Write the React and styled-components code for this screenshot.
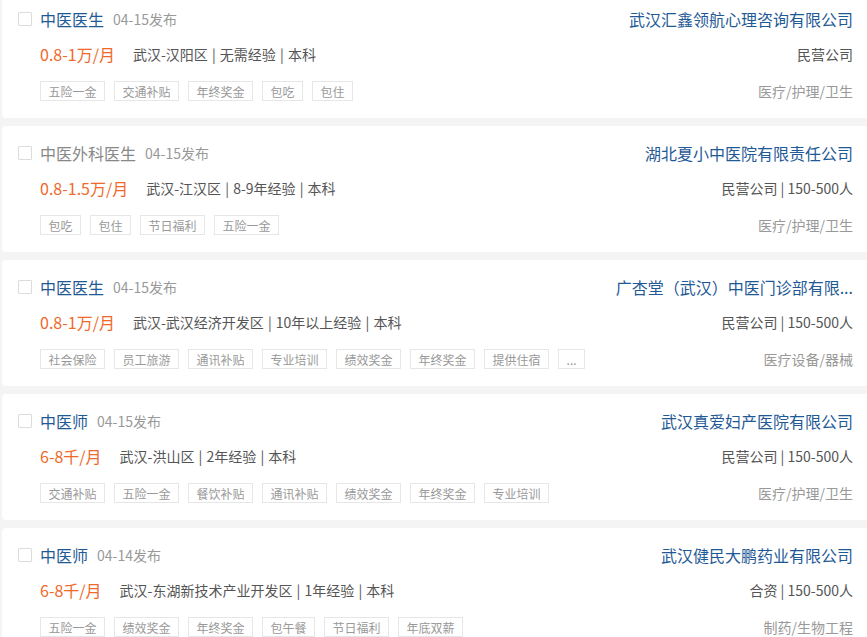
import React from 'react';
import styled, { createGlobalStyle } from 'styled-components';

const GlobalStyle = createGlobalStyle`
  html, body {
    margin: 0;
    padding: 0;
    background: #f4f4f4;
    overflow: hidden;
    font-family: "Noto Sans CJK SC", "Noto Sans", sans-serif;
  }
`;

const List = styled.div`
  display: flex;
  flex-direction: column;
  gap: 8px;
  margin-top: -8px;
  padding-left: 2px;
  margin-right: -6px;
`;

const Card = styled.div`
  display: flex;
  justify-content: space-between;
  background: #fff;
  border-radius: 4px;
  height: 126px;
  box-sizing: border-box;
  padding: 17px 20px 17px 16px;
`;

const Column = styled.div`
  display: flex;
  flex-direction: column;
  align-items: ${p => (p.$right ? 'flex-end' : 'flex-start')};
  min-width: 0;
`;

const Row = styled.div`
  display: flex;
  align-items: center;
  height: 20px;
  margin-top: ${p => p.$gap || 0}px;
  white-space: nowrap;
`;

const Check = styled.span`
  width: 12px;
  height: 12px;
  border: 1px solid #dcdcdc;
  border-radius: 1px;
  background: #fff;
  margin-right: 8px;
`;

const Title = styled.span`
  font-size: 16px;
  color: ${p => (p.$visited ? '#888' : '#1f5a96')};
  margin-right: 9px;
`;

const Date = styled.span`
  font-size: 14px;
  color: #999;
`;

const Salary = styled.span`
  font-size: 16px;
  color: #f0692a;
  margin-left: 22px;
  margin-right: 18px;
`;

const Info = styled.span`
  font-size: 14px;
  color: #555;
  word-spacing: 1px;
`;

const Tags = styled.div`
  display: flex;
  gap: 9px;
  margin-left: 22px;
`;

const Tag = styled.span`
  display: flex;
  align-items: center;
  height: 20px;
  box-sizing: border-box;
  padding: 0 7.5px;
  border: 1px solid #e6e6e6;
  font-size: 12px;
  color: #999;
`;

const Company = styled.span`
  font-size: 16px;
  color: #1f5a96;
`;

const Kind = styled.span`
  font-size: 14px;
  color: #555;
`;

const Industry = styled.span`
  font-size: 14px;
  color: #999;
`;

const jobs = [
  {
    title: '中医医生', date: '04-15发布', salary: '0.8-1万/月',
    info: '武汉-汉阳区 | 无需经验 | 本科',
    tags: ['五险一金', '交通补贴', '年终奖金', '包吃', '包住'],
    company: '武汉汇鑫领航心理咨询有限公司', kind: '民营公司', industry: '医疗/护理/卫生',
  },
  {
    title: '中医外科医生', visited: true, date: '04-15发布', salary: '0.8-1.5万/月',
    info: '武汉-江汉区 | 8-9年经验 | 本科',
    tags: ['包吃', '包住', '节日福利', '五险一金'],
    company: '湖北夏小中医院有限责任公司', kind: '民营公司 | 150-500人', industry: '医疗/护理/卫生',
  },
  {
    title: '中医医生', date: '04-15发布', salary: '0.8-1万/月',
    info: '武汉-武汉经济开发区 | 10年以上经验 | 本科',
    tags: ['社会保险', '员工旅游', '通讯补贴', '专业培训', '绩效奖金', '年终奖金', '提供住宿', '...'],
    company: '广杏堂（武汉）中医门诊部有限...', kind: '民营公司 | 150-500人', industry: '医疗设备/器械',
  },
  {
    title: '中医师', date: '04-15发布', salary: '6-8千/月',
    info: '武汉-洪山区 | 2年经验 | 本科',
    tags: ['交通补贴', '五险一金', '餐饮补贴', '通讯补贴', '绩效奖金', '年终奖金', '专业培训'],
    company: '武汉真爱妇产医院有限公司', kind: '民营公司 | 150-500人', industry: '医疗/护理/卫生',
  },
  {
    title: '中医师', date: '04-14发布', salary: '6-8千/月',
    info: '武汉-东湖新技术产业开发区 | 1年经验 | 本科',
    tags: ['五险一金', '绩效奖金', '年终奖金', '包午餐', '节日福利', '年底双薪'],
    company: '武汉健民大鹏药业有限公司', kind: '合资 | 150-500人', industry: '制药/生物工程',
  },
];

function App() {
  return (
    <>
      <GlobalStyle />
      <List>
        {jobs.map((job, i) => (
          <Card key={i}>
            <Column>
              <Row>
                <Check />
                <Title $visited={job.visited}>{job.title}</Title>
                <Date>{job.date}</Date>
              </Row>
              <Row $gap={15}>
                <Salary>{job.salary}</Salary>
                <Info>{job.info}</Info>
              </Row>
              <Row $gap={17}>
                <Tags>
                  {job.tags.map(t => <Tag key={t}>{t}</Tag>)}
                </Tags>
              </Row>
            </Column>
            <Column $right>
              <Row>
                <Company>{job.company}</Company>
              </Row>
              <Row $gap={15}>
                <Kind>{job.kind}</Kind>
              </Row>
              <Row $gap={17}>
                <Industry>{job.industry}</Industry>
              </Row>
            </Column>
          </Card>
        ))}
      </List>
    </>
  );
}

export default App;
